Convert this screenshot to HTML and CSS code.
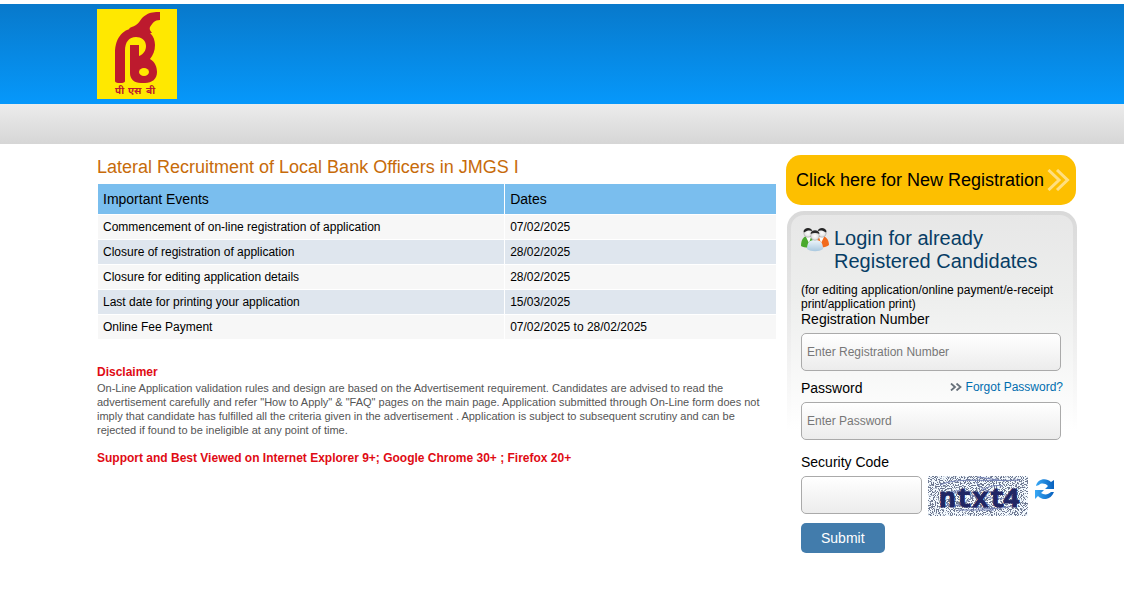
FILE: index.html
```html
<!DOCTYPE html>
<html lang="en">
<head>
<meta charset="utf-8">
<meta name="viewport" content="width=device-width, initial-scale=1">
<title>Lateral Recruitment of Local Bank Officers in JMGS I</title>
<link rel="stylesheet" href="styles.css">
</head>
<body>
<header class="banner">
  <svg class="logo" viewBox="0 0 80 90" role="img" aria-label="Bank logo">
    <rect width="80" height="90" fill="#ffe800"/>
    <path d="M18 72V44C18 28 27 19 39 19C52 19 58 27 58 36C58 42 56 46 53 50C58 53 60 58 60 63C60 70 55 74 48 74H44C37 74 33 70 33 64V36H42V47C47 45 49 41 49 37C49 31 44 28 39 28C32 28 28 33 28 42V72Q28 74 23 74T18 72Z" fill="#bd1a2e"/>
    <path d="M32 20C33 18 36 18 39 16C44 13 43 9 49 6C53 3 58 3 63 3V11C57 11 56 14 53 18C52 21 54 22 55 24L40 24Z" fill="#bd1a2e"/>
    <ellipse cx="47" cy="63" rx="5" ry="4" fill="#ffe800"/>
    <text class="logo-text" y="85"><tspan x="18">पी</tspan><tspan x="31">एस</tspan><tspan x="49">बी</tspan></text>
  </svg>
</header>
<div class="nav-strip"></div>
<main class="page">
  <section class="info">
    <h1 class="title">Lateral Recruitment of Local Bank Officers in JMGS I</h1>
    <table class="events">
      <thead><tr><th class="event-col" scope="col">Important Events</th><th scope="col">Dates</th></tr></thead>
      <tbody>
        <tr><td>Commencement of on-line registration of application</td><td>07/02/2025</td></tr>
        <tr><td>Closure of registration of application</td><td>28/02/2025</td></tr>
        <tr><td>Closure for editing application details</td><td>28/02/2025</td></tr>
        <tr><td>Last date for printing your application</td><td>15/03/2025</td></tr>
        <tr><td>Online Fee Payment</td><td>07/02/2025 to 28/02/2025</td></tr>
      </tbody>
    </table>
    <h2 class="notice">Disclaimer</h2>
    <p class="disclaimer">On-Line Application validation rules and design are based on the Advertisement requirement. Candidates are advised to read the advertisement carefully and refer "How to Apply" &amp; "FAQ" pages on the main page. Application submitted through On-Line form does not imply that candidate has fulfilled all the criteria given in the advertisement . Application is subject to subsequent scrutiny and can be rejected if found to be ineligible at any point of time.</p>
    <p class="notice">Support and Best Viewed on Internet Explorer 9+; Google Chrome 30+ ; Firefox 20+</p>
  </section>
  <aside class="side">
    <a class="register" href="#">Click here for New Registration
      <svg class="register-arrow" viewBox="0 0 23 22" aria-hidden="true"><path d="M1.500 1L12 11L1.500 21M10 1L20.500 11L10 21" fill="none" stroke="#ffdf80" stroke-width="3"/></svg>
    </a>
    <form class="login">
      <div class="login-head">
        <svg class="people" viewBox="0 0 28 26" aria-hidden="true">
          <defs>
            <radialGradient id="face"><stop offset="0" stop-color="#fff"/><stop offset=".7" stop-color="#e4e4e4"/><stop offset="1" stop-color="#aaa"/></radialGradient>
            <linearGradient id="shirt" x2="0" y2="1"><stop offset="0" stop-color="#eef5fb"/><stop offset="1" stop-color="#a9c8df"/></linearGradient>
          </defs>
          <path d="M0 19C0 12 3 9 7 9S13 13 13 20C9 21 3 21 0 19Z" fill="#49a92e"/>
          <path d="M15 19C15 12 18 9 21 9S28 12 28 18C25 21 18 21 15 19Z" fill="#f26a1c"/>
          <path d="M5 10L8 16L10 10ZM18 10L20 16L23 10Z" fill="#fff"/>
          <circle cx="7" cy="6" r="4.500" fill="url(#face)"/><circle cx="21" cy="6" r="4.500" fill="url(#face)"/>
          <path d="M2.500 4C4 0 10 0 11.500 4C9 3 6 3 3 5.500ZM16.500 4C18 0 24 0 25.500 4L25 5.500C22 3 19 3 16.500 4Z" fill="#252525"/>
          <path d="M6 22C6 15 9 13 14 13S22 15 22 22C18 25 10 25 6 22Z" fill="url(#shirt)"/>
          <circle cx="14" cy="9" r="4.500" fill="url(#face)"/>
          <path d="M9.500 7C10 2 18 2 18.500 7C16 5.500 12 5.500 9.500 7Z" fill="#292929"/>
        </svg>
        <h2 class="login-title">Login for already Registered Candidates</h2>
      </div>
      <p class="hint">(for editing application/online payment/e-receipt print/application print)</p>
      <label class="label" for="reg">Registration Number</label>
      <input class="field" id="reg" type="text" placeholder="Enter Registration Number">
      <div class="password-row">
        <label class="label" for="pwd">Password</label>
        <a class="forgot" href="#"><svg class="forgot-arrow" viewBox="0 0 12 8" aria-hidden="true"><path d="M1 .5L5 4L1 7.500M6.500 .5L10.500 4L6.500 7.500" fill="none" stroke="#67717b" stroke-width="1.800"/></svg>Forgot Password?</a>
      </div>
      <input class="field" id="pwd" type="password" placeholder="Enter Password">
      <label class="label code-label" for="code">Security Code</label>
      <div class="code-row">
        <input class="field code-field" id="code" type="text">
        <svg class="captcha" viewBox="0 0 100 40" role="img" aria-label="Security code">
          <defs><filter id="noise" x="0" y="0" width="100%" height="100%" color-interpolation-filters="sRGB">
            <feTurbulence type="fractalNoise" baseFrequency=".95" numOctaves="2" seed="8"/>
            <feColorMatrix values="0 0 0 0 .25  0 0 0 0 .3  0 0 0 0 .42  14 0 0 0 -7"/>
          </filter></defs>
          <rect width="100" height="40" fill="#f4faff"/>
          <rect width="100" height="40" filter="url(#noise)" opacity=".75"/>
          <path d="M12 9C30 1 55 6 92 4M12 31C35 24 55 39 88 29M20 17C45 7 60 33 90 18M18 27C40 39 48 5 75 10M30 34H66M50 1L77 5M48 6C60 22 72 12 88 25M15 20C35 12 50 20 65 32" fill="none" stroke="#7481b5" stroke-width="1"/>
          <text class="captcha-text" x="11 28 44 61 75" y="31">ntxt4</text>
        </svg>
        <button class="refresh" type="button" aria-label="Refresh security code">
          <svg class="refresh-icon" viewBox="0 0 20 20" aria-hidden="true">
            <defs><linearGradient id="blue"><stop offset="0" stop-color="#38a8f5"/><stop offset="1" stop-color="#0860bd"/></linearGradient></defs>
            <path d="M1 7C2 0 11-2 16 3L19 1V10H10L13 7C10 4 6 4 4 6Z" fill="url(#blue)"/>
            <path d="M0 11H9L6 14C9 16 13 16 16 13L19 13C16 21 8 22 3 17L0 20Z" fill="url(#blue)"/>
          </svg>
        </button>
      </div>
      <button class="submit" type="submit">Submit</button>
    </form>
  </aside>
</main>
</body>
</html>
```
FILE: styles.css
```css
* { box-sizing: border-box; }
body {
  margin: 0;
  padding-top: 4px;
  background: #fff;
  color: #000;
  font: 12px/14px "Liberation Sans", Arial, sans-serif;
}
h1, h2, p { margin: 0; }
.banner {
  padding: 5px 97px;
  background: linear-gradient(#0879cb, #0698fb);
}
.logo { display: block; width: 80px; height: 90px; }
.logo-text { font: bold 10px "Noto Sans", sans-serif; fill: #bd1a2e; }
.nav-strip { height: 40px; background: linear-gradient(#ececec, #d6d6d6); }
.page {
  display: grid;
  grid-template-columns: minmax(0, 1fr) 291px;
  gap: 9px;
  padding: 11px 47px 24px 97px;
}
.title {
  margin-bottom: 4px;
  padding-top: 1px;
  color: #c76b0a;
  font-size: 18px;
  font-weight: normal;
  line-height: 23px;
}
.events { width: 100%; border-spacing: 1px; }
.events th {
  height: 30px;
  padding: 0 5px;
  background: #7abeee;
  font-size: 14px;
  font-weight: normal;
  text-align: left;
}
.event-col { width: 60%; }
.events td { height: 24px; padding: 0 5px; background: #f7f7f7; }
.events tr:nth-child(even) td { background: #dfe6ee; }
.events + .notice { margin-top: 24px; }
.notice { color: #e00b14; font-size: 12px; font-weight: bold; line-height: 16px; }
.disclaimer {
  margin: 1px 0 13px;
  padding-right: 10px;
  color: #555;
  font-size: 11px;
  line-height: 14px;
}
.register {
  display: flex;
  align-items: center;
  justify-content: space-between;
  height: 50px;
  margin-right: 1px;
  padding: 0 6px 0 10px;
  border-radius: 15px;
  background: #fdbf00;
  color: #000;
  font-size: 18px;
  text-decoration: none;
  white-space: nowrap;
}
.register-arrow { width: 23px; height: 22px; }
.login {
  margin: 6px 0 0 1px;
  padding: 12px 12px 16px 10px;
  border: 4px solid transparent;
  border-radius: 17px;
  background:
    linear-gradient(#e7e7e7, #edeeed 80px, #fff 215px) padding-box,
    linear-gradient(#d9d9d9, #e5e5e5 80px, #fff 220px) border-box;
}
.login-head { display: flex; gap: 5px; }
.people { width: 28px; height: 26px; flex: none; }
.login-title { color: #073d65; font-size: 20px; font-weight: normal; line-height: 23px; }
.hint { margin: 10px -2px 0 0; }
.label { display: block; font-size: 14px; line-height: 16px; }
.field {
  display: block;
  width: 100%;
  height: 38px;
  margin-top: 6px;
  padding: 0 5px;
  border: 1px solid #aaa;
  border-radius: 5px;
  background: linear-gradient(#fff, #ececec);
  font: inherit;
}
.field::placeholder { color: #777; opacity: 1; }
.password-row { display: flex; justify-content: space-between; margin: 9px -2px 0 0; }
.forgot { color: #006daf; text-decoration: none; }
.forgot-arrow { width: 12px; height: 8px; margin-right: 4px; }
.code-label { margin-top: 14px; }
.code-row { display: flex; gap: 6px; margin-top: 6px; }
.code-field { width: 121px; margin: 0; }
.captcha { width: 100px; height: 40px; }
.captcha-text { font: bold 28px "Liberation Mono", monospace; fill: #202664; stroke: #202664; stroke-width: 1px; }
.refresh { align-self: flex-start; padding: 3px 0 0 1px; border: 0; background: none; }
.refresh-icon { display: block; width: 20px; height: 20px; }
.submit {
  display: block;
  height: 30px;
  margin-top: 7px;
  padding: 0 20px;
  border: 0;
  border-radius: 5px;
  background: #427cac;
  color: #fff;
  font: 14px "Liberation Sans", Arial, sans-serif;
}
```
